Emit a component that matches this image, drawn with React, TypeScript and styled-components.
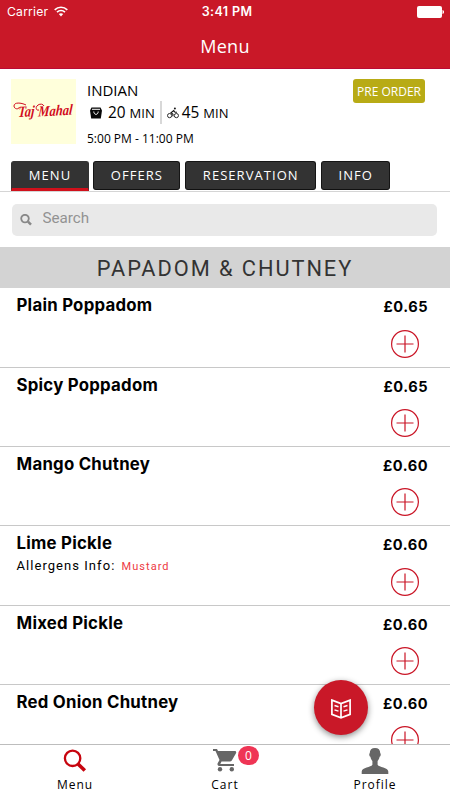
import React from "react";
import styled, { createGlobalStyle } from "styled-components";

const Global = createGlobalStyle`
  *, *::before, *::after { box-sizing: border-box; }
  body { margin: 0; background: #fff; overflow: hidden; }
`;

const sans = `"Open Sans", "Noto Sans", sans-serif`;
const roboto = `Roboto, sans-serif`;
const inter = `Inter, "Liberation Sans", sans-serif`;

const Screen = styled.div`
  position: relative;
  display: flex;
  flex-direction: column;
  width: 450px;
  height: 800px;
  overflow: hidden;
  background: #fff;
  color: #000;
  white-space: nowrap;
`;

const Header = styled.header`
  flex: none;
  height: 69px;
  background: #c91828;
  border-bottom: 1px solid #bb0a36;
  color: #fff;
`;

const StatusBar = styled.div`
  display: grid;
  grid-template-columns: 1fr auto 1fr;
  align-items: center;
  height: 23px;
  padding: 0 6px 0 7px;
  font: 400 12.2px/23px ${inter};
`;

const Carrier = styled.div`
  display: flex;
  align-items: center;
  gap: 6px;
  letter-spacing: 0.2px;
`;

const Clock = styled.div`
  padding-left: 3px;
  font-weight: 600;
  font-size: 12.5px;
  letter-spacing: 0.4px;
`;

const BatteryIcon = styled.svg`
  justify-self: end;
`;

const Title = styled.h1`
  margin: 0;
  font: 400 18px/47px ${sans};
  letter-spacing: 0.3px;
  text-align: center;
`;

const Shop = styled.section`
  flex: none;
  display: flex;
  height: 92px;
  padding: 10px 25px 0 11px;
`;

const Logo = styled.svg`
  flex: none;
  width: 65px;
  height: 65px;
  overflow: visible;
  background: #ffffdb;
`;

const Details = styled.div`
  flex: 1;
  padding-left: 11px;
  font-family: ${sans};
`;

const Cuisine = styled.div`
  font-size: 15px;
  line-height: 22px;
`;

const Times = styled.div`
  display: flex;
  align-items: center;
  height: 23px;
  padding-left: 3px;
  line-height: 23px;
`;

const Duration = styled.span<{ $left: number }>`
  margin-left: ${(p) => p.$left}px;
  font-size: 15.4px;
`;

const Unit = styled.span`
  font-size: 13px;
`;

const Divider = styled.span`
  width: 2px;
  height: 23px;
  margin: 0 5px;
  background: #d8d8d8;
`;

const Hours = styled.div`
  margin-top: 5px;
  font-size: 12px;
  line-height: 20px;
`;

const PreOrder = styled.span`
  width: 72px;
  height: 24px;
  border-radius: 3px;
  background: #b8ab15;
  color: #fff;
  font: 400 12px/25px ${sans};
  text-align: center;
`;

const Tabs = styled.nav`
  flex: none;
  display: flex;
  gap: 4.5px;
  height: 31px;
  padding-left: 11.4px;
  border-bottom: 1px solid #d5d5d5;
`;

const Tab = styled.button<{ $width: number; $active?: boolean }>`
  width: ${(p) => p.$width}px;
  height: ${(p) => (p.$active ? 30 : 29)}px;
  padding: 0;
  border: 1px solid ${(p) => (p.$active ? "#333" : "#151515")};
  border-bottom: ${(p) => (p.$active ? "3px solid #d1101b" : "1px solid #111")};
  border-radius: ${(p) => (p.$active ? "3px 3px 0 0" : "3px")};
  background: #333;
  color: #fff;
  font: 400 13px/27px ${sans};
  letter-spacing: 1.05px;
`;

const SearchBox = styled.label`
  flex: none;
  display: flex;
  align-items: center;
  gap: 11px;
  height: 32px;
  margin: 12px 13px 11px 12px;
  padding: 0 8px 0 7.5px;
  border-radius: 5px;
  background: #e9e9e9;
`;

const SearchField = styled.input`
  flex: 1;
  height: 28px;
  margin-bottom: 5px;
  padding: 0;
  border: 0;
  outline: 0;
  background: transparent;
  font: 400 15.2px/28px ${roboto};
  &::placeholder { color: #929292; opacity: 1; }
`;

const Category = styled.h2`
  flex: none;
  height: 41px;
  margin: 0;
  background: #d3d3d3;
  color: #333;
  font: 400 21.8px/43px ${roboto};
  letter-spacing: 1.93px;
  text-align: center;
`;

const List = styled.main`
  flex: 1;
  min-height: 0;
  padding-top: 0.4px;
  overflow: hidden;
`;

const Item = styled.article`
  display: flex;
  justify-content: space-between;
  height: 79.3px;
  padding: 0 22px 0 16.5px;
  border-bottom: 1px solid #c8c8c8;
`;

const Name = styled.h3`
  margin: 6.1px 0 0;
  font: 700 16.8px/22px ${inter};
  letter-spacing: 0.25px;
`;

const Allergens = styled.p`
  margin: 2px 0 0;
  font: 400 13px/20px ${roboto};
  letter-spacing: 1.05px;
`;

const Allergen = styled.span`
  margin-left: 2px;
  color: #ed3a44;
  font-size: 11px;
  letter-spacing: 1.03px;
`;

const Purchase = styled.div`
  display: flex;
  flex-direction: column;
  align-items: flex-end;
`;

const Price = styled.div`
  margin-top: 8px;
  font: 700 14.6px/22px ${inter};
  letter-spacing: 0.5px;
`;

const AddButton = styled.button`
  display: flex;
  margin: 11.5px 9px 0 0;
  padding: 0;
  border: 0;
  background: none;
`;

const BottomBar = styled.nav`
  flex: none;
  display: grid;
  grid-template-columns: repeat(3, 1fr);
  height: 56px;
  border-top: 1px solid #bdbdbd;
  background: #fff;
`;

const BottomItem = styled.div`
  display: flex;
  flex-direction: column;
  align-items: center;
  padding-top: 3px;
  font: 400 12px/18px ${sans};
  letter-spacing: 1px;
`;

const IconSlot = styled.div`
  position: relative;
  display: flex;
  height: 28px;
`;

const Badge = styled.span`
  position: absolute;
  left: 25px;
  top: -2px;
  width: 21px;
  height: 19px;
  border-radius: 10px;
  background: #ef3555;
  color: #fff;
  font: 400 12px/19px ${sans};
  letter-spacing: 0;
  text-align: center;
`;

const FloatingButton = styled.button`
  position: absolute;
  left: 314px;
  top: 680px;
  display: flex;
  align-items: center;
  justify-content: center;
  width: 54px;
  height: 55px;
  padding: 2px 0 0;
  border: 0;
  border-radius: 50%;
  background: #c91828;
  box-shadow: 0 2px 6px rgba(0, 0, 0, 0.45);
`;

const WifiIcon = () => (
  <svg width="14" height="11" viewBox="0 0 14 11" fill="none" stroke="#fff" strokeWidth="1.7">
    <path d="M.7 3.8C4.3.4 9.7.4 13.3 3.8M3 6.2c2.3-2 5.7-2 8 0" />
    <path d="M4.8 8C6 6.9 8 6.9 9.2 8L7 10.4z" fill="#fff" stroke="none" />
  </svg>
);

const LogoArt = () => (
  <Logo viewBox="0 0 65 65">
    <g fill="#d10b20" fontFamily="Liberation Serif, serif" fontStyle="italic" fontWeight="700" fontSize="13.5">
      <text transform="matrix(.92 -.05 -.08 1.15 7 38)">Taj</text>
      <text transform="matrix(.93 -.05 -.08 1.12 27 37.5)">Mahal</text>
    </g>
    <path d="M15 26C10 23.5 3 23 3 27c0 3 4.5 4 5.5 1M28 31c-3 1-4-3-1-5 2.5-1.5 5-1 6 1" fill="none" stroke="#d10b20" strokeWidth="1" />
  </Logo>
);

const BagIcon = () => (
  <svg width="12" height="12" viewBox="0 0 12 12">
    <path d="M1.5.5h9l1.5 3-1.2 8H1.2L0 3.5z" fill="#080808" />
    <path d="M2 2.3h8M3.8 4.5c0 3.8 4.4 3.8 4.4 0" stroke="#fff" fill="none" strokeWidth="1" />
  </svg>
);

const BikeIcon = () => (
  <svg width="12" height="12" viewBox="0 0 12 12" fill="none" stroke="#171717" strokeWidth="0.9">
    <circle cx="2.6" cy="8.6" r="2.1" /><circle cx="9.4" cy="8.6" r="2.1" />
    <path d="M5.8 9.4 6 7.2 4 5.7l2.7-2.2 1.3 1.8h2" strokeWidth="1.1" />
    <circle cx="7.9" cy="1.6" r="1" fill="#171717" stroke="none" />
  </svg>
);

const SmallSearchIcon = () => (
  <svg width="12" height="12" viewBox="0 0 12 12" fill="none" stroke="#888" strokeWidth="1.8">
    <circle cx="5" cy="4.6" r="3.8" /><path d="m8 7.6 3 3" strokeWidth="2.4" />
  </svg>
);

const PlusIcon = () => (
  <svg width="28" height="28" viewBox="0 0 28 28" fill="none" stroke="#ca1526">
    <circle cx="14" cy="14" r="13.4" strokeWidth="1.2" />
    <path d="M5.5 14h17M14 5.5v17" strokeWidth="1.2" />
  </svg>
);

const MenuIcon = () => (
  <svg width="24" height="25" viewBox="0 0 24 25" fill="none" stroke="#c7040e">
    <circle cx="9.6" cy="10.3" r="7.7" strokeWidth="2.3" />
    <path d="m15 16 6.8 6.5" strokeWidth="3.6" />
  </svg>
);

const CartIcon = () => (
  <svg width="24" height="24" viewBox="0 0 24 24" fill="#666">
    <path d="M0 1v2h2.5l4 9-1.7 3c-.9 1.6.2 3 1.9 3H21v-2H7.3l1.2-2.4h8.4c.8 0 1.5-.4 1.9-1L23 5.2C23.5 4.3 23 3 22 3H5L4 1z" />
    <circle cx="7" cy="21.3" r="2.2" /><circle cx="18.8" cy="21.3" r="2.2" />
  </svg>
);

const ProfileIcon = () => (
  <svg width="28" height="26" viewBox="0 0 28 26" fill="#666">
    <path d="M14 0C10.5 0 8.7 2 8.8 5.3c-1 .2-.5 3.2.6 3.5.4 2.1 1.2 3.4 2 4.3v3.7C10 19.5 1 19.3.7 23.5V26h26.6v-2.5c-.3-4.2-9.3-4-10.7-6.7v-3.7c.8-.9 1.6-2.2 2-4.3 1.1-.3 1.6-3.3.6-3.5C19.3 2 17.5 0 14 0z" />
  </svg>
);

const BookIcon = () => (
  <svg width="20" height="20" viewBox="0 0 20 20" fill="none" stroke="#fff" strokeWidth="1.7">
    <path d="M.9 1.1 10 4.5l9.1-3.4v14.3L10 18.8.9 15.4zM10 4.5v14.3" />
    <path d="m3.5 6.5 4 1.2M3.5 10.9l4 1.2M16.5 6.5l-4 1.2M16.5 10.9l-4 1.2" strokeWidth="1.5" />
  </svg>
);

const items = [
  { name: "Plain Poppadom", price: "£0.65" },
  { name: "Spicy Poppadom", price: "£0.65" },
  { name: "Mango Chutney", price: "£0.60" },
  { name: "Lime Pickle", price: "£0.60", allergen: "Mustard" },
  { name: "Mixed Pickle", price: "£0.60" },
  { name: "Red Onion Chutney", price: "£0.60" },
];

export default function App() {
  return (
    <Screen>
      <Global />
      <Header>
        <StatusBar>
          <Carrier>Carrier <WifiIcon /></Carrier>
          <Clock>3:41 PM</Clock>
          <BatteryIcon width="27" height="12" viewBox="0 0 27 12" fill="#fff">
            <rect width="25" height="12" rx="2" /><path d="M25.5 4c2 .3 2 3.7 0 4z" />
          </BatteryIcon>
        </StatusBar>
        <Title>Menu</Title>
      </Header>
      <Shop>
        <LogoArt />
        <Details>
          <Cuisine>INDIAN</Cuisine>
          <Times>
            <BagIcon />
            <Duration $left={6}>20 <Unit>MIN</Unit></Duration>
            <Divider />
            <BikeIcon />
            <Duration $left={3}>45 <Unit>MIN</Unit></Duration>
          </Times>
          <Hours>5:00 PM - 11:00 PM</Hours>
        </Details>
        <PreOrder>PRE ORDER</PreOrder>
      </Shop>
      <Tabs>
        <Tab $width={77.3} $active>MENU</Tab>
        <Tab $width={87.3}>OFFERS</Tab>
        <Tab $width={131.5}>RESERVATION</Tab>
        <Tab $width={69.5}>INFO</Tab>
      </Tabs>
      <SearchBox>
        <SmallSearchIcon />
        <SearchField placeholder="Search" />
      </SearchBox>
      <Category>PAPADOM &amp; CHUTNEY</Category>
      <List>
        {items.map((item) => (
          <Item key={item.name}>
            <div>
              <Name>{item.name}</Name>
              {item.allergen && (
                <Allergens>Allergens Info: <Allergen>{item.allergen}</Allergen></Allergens>
              )}
            </div>
            <Purchase>
              <Price>{item.price}</Price>
              <AddButton aria-label={`Add ${item.name}`}><PlusIcon /></AddButton>
            </Purchase>
          </Item>
        ))}
      </List>
      <BottomBar>
        <BottomItem><IconSlot><MenuIcon /></IconSlot>Menu</BottomItem>
        <BottomItem><IconSlot><CartIcon /><Badge>0</Badge></IconSlot>Cart</BottomItem>
        <BottomItem><IconSlot><ProfileIcon /></IconSlot>Profile</BottomItem>
      </BottomBar>
      <FloatingButton aria-label="Menu categories"><BookIcon /></FloatingButton>
    </Screen>
  );
}
